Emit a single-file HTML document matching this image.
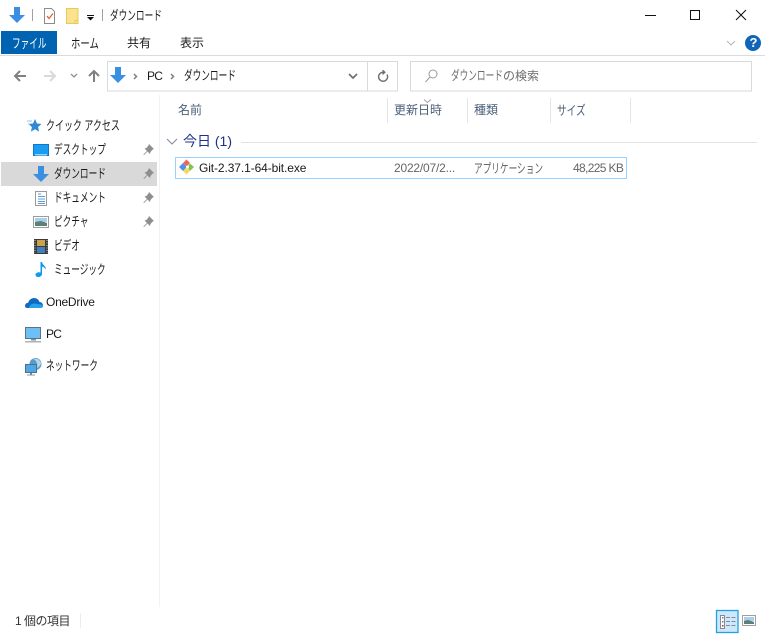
<!DOCTYPE html>
<html><head><meta charset="utf-8"><style>
html,body{margin:0;padding:0;width:765px;height:634px;overflow:hidden;background:#fff}
body{position:relative;font-family:"Liberation Sans","Noto Sans CJK JP",sans-serif;font-size:12px;color:#1a1a1a}
.t{position:absolute;white-space:nowrap;font-size:13px;line-height:16px;height:16px;margin-top:1px;transform-origin:0 50%;transform:scaleX(.665)}
.l{position:absolute;white-space:nowrap;line-height:16px;height:16px}
.g{color:#4c607a}
.b{position:absolute;box-sizing:border-box}
svg{position:absolute;overflow:visible}
</style></head><body>
<svg style="left:0;top:0" width="765" height="634" viewBox="0 0 765 634">
<defs><path id="dl" d="M5 0h6v8h5l-8 8-8-8h5z" fill="#3a8fe3"/>
<path id="pin" d="M6 0l5 5-1.500.6L7.500 8 7 10 4.500 7.500 1 11l-.6-.6L4 7 1.500 4.500 3.500 4 5.400 1.500z" fill="#8e8e8e"/></defs>
<use href="#dl" x="9" y="7"/>
<rect x="32" y="9" width="1" height="12" fill="#a0a0a0"/>
<path d="M44.500 8.500h7l3 3v12h-10z" fill="#fff" stroke="#8c8c8c"/><path d="M47 16l2 2.500 4-5" fill="none" stroke="#e2603a" stroke-width="1.300"/>
<path d="M66.500 8.500h11.500v15h-11.500z" fill="#fbe28f" stroke="#e8c95e"/><path d="M75 24v-3.500h3" fill="none" stroke="#e8c95e"/>
<rect x="87" y="15" width="7" height="1" fill="#111"/><path d="M87 17h7l-3.500 3.500z" fill="#111"/>
<rect x="102" y="9" width="1" height="12" fill="#a0a0a0"/>
<rect x="645" y="15" width="11" height="1" fill="#111"/>
<rect x="690.500" y="10.500" width="9" height="9" fill="none" stroke="#111"/>
<path d="M736 10l10 10M746 10l-10 10" stroke="#111" stroke-width="1.050" fill="none"/>
<path d="M727 41l4 4 4-4" fill="none" stroke="#b5b5b5"/>
<circle cx="753" cy="43" r="8" fill="#0f66b8"/>
<rect x="0" y="55" width="765" height="1" fill="#dadbdc"/>
<path d="M26 76H15.500M20 71l-5 5 5 5" fill="none" stroke="#808080" stroke-width="2"/>
<path d="M44 76h10.500M50 71l5 5-5 5" fill="none" stroke="#d9d9d9" stroke-width="2"/>
<path d="M71 74l3 3 3-3" fill="none" stroke="#8f8f8f" stroke-width="1.300"/>
<path d="M94 82V71M89 76l5-5 5 5" fill="none" stroke="#808080" stroke-width="2"/>
<rect x="107.500" y="61.500" width="290" height="29.500" fill="#fff" stroke="#d9d9d9"/>
<rect x="367" y="61" width="1" height="30" fill="#d9d9d9"/>
<use href="#dl" x="110" y="67"/>
<path d="M134 74l2.500 2.500-2.500 2.500M171 74l2.500 2.500-2.500 2.500" fill="none" stroke="#808080" stroke-width="1.500"/>
<path d="M349 74l4 4 4-4" fill="none" stroke="#707070" stroke-width="1.700"/>
<path d="M387 74.500a4.500 4.500 0 1 1-3.200-2.200h1.200M382.500 70.300l2.300 2-2.300 2" fill="none" stroke="#707070" stroke-width="1.400"/>
<rect x="410.500" y="61.500" width="341" height="29.500" fill="#fff" stroke="#d9d9d9"/>
<circle cx="433" cy="74" r="4" fill="none" stroke="#9a9a9a"/><path d="M430 77l-4.500 5" stroke="#9a9a9a" fill="none"/>
<rect x="159" y="95" width="1" height="512" fill="#f2f2f2"/>
<rect x="1" y="162" width="156" height="24" fill="#d9d9d9"/>
<path d="M35 119l2 4.500 4.500.5-3.400 3 1 4.600-4.100-2.400-4.100 2.400 1-4.600-3.400-3 4.500-.5z" fill="#2f88d8"/><path d="M27 121h5M28 124h2" stroke="#8cc4ef"/>
<rect x="33.500" y="144.500" width="15" height="11" fill="#1a9cf0" stroke="#0f78c8"/><rect x="35" y="154" width="12" height="1.500" fill="#9ad4f8"/>
<use href="#dl" x="33" y="166"/>
<g transform="translate(143 144)"><use href="#pin"/></g><g transform="translate(143 168)"><use href="#pin"/></g><g transform="translate(143 192)"><use href="#pin"/></g><g transform="translate(143 216)"><use href="#pin"/></g>
<rect x="35.500" y="191.500" width="11" height="14" fill="#fff" stroke="#9a9a9a"/><path d="M38 194h3M38 196.500h7M38 199h7M38 201.500h7M38 203.500h7" stroke="#5b9bd5"/>
<rect x="33.500" y="216.500" width="15" height="11" fill="#fff" stroke="#9c9c9c"/><path d="M35 218h12v4l-12 1z" fill="#a8d0ee"/><path d="M35 222l6-1 6 2v3H35z" fill="#5c8074"/>
<rect x="34" y="239" width="14" height="15" fill="#3a3a3a"/><rect x="37" y="240" width="8" height="6" fill="#c9a24a"/><rect x="37" y="247" width="8" height="6" fill="#3f7fc0"/><path d="M35 240v13M47 240v13" stroke="#cfcfcf" stroke-dasharray="1 1.500"/>
<path d="M40.500 262h1.500c.5 3 4 4 4 7.500-1-1.500-2.500-2.500-4-2.700V274c0 1.700-1.600 3-3.500 3s-3-1-3-2.300 1.600-2.500 3.500-2.500c.6 0 1.100.1 1.500.3z" fill="#0f9af0"/>
<path d="M25 306c0-2 1.500-3.300 3.200-3.300C29 299.800 31.500 298 34 298c2.600 0 4.800 1.600 5.400 4 2.200 0 3.600 1.800 3.600 3.500 0 1.600-1.200 2.500-2.600 2.500H27.500C26 308 25 307.300 25 306z" fill="#0f6cbd"/><path d="M29 308c0-2.300 2.500-4.500 5.500-4.500 2 0 3.500.7 5 .7 1.600 0 3.500 1.300 3.500 1.500 0 1.600-1.200 2.300-2.600 2.300z" fill="#2aa0e8"/>
<rect x="25.500" y="327.500" width="15" height="11" fill="#6cc0f6" stroke="#5f7482"/><rect x="31" y="339" width="5" height="1.500" fill="#7f8f9a"/><rect x="25" y="341" width="16" height="1.500" fill="#aab4bc"/>
<circle cx="35.500" cy="364" r="6" fill="#5a9bc9"/><path d="M33 359c3 1 5 4 4 9 2-1 4-3 4-5-.5-2-3-5-8-4z" fill="#b6d6e9"/>
<rect x="25.500" y="364.500" width="11" height="8" fill="#4ea7e6" stroke="#4f7186"/><rect x="30" y="373" width="2" height="1.500" fill="#708795"/><rect x="27" y="374.500" width="8" height="1" fill="#8a9aa6"/>
<rect x="387" y="98" width="1" height="25" fill="#e5e5e5"/><rect x="467" y="98" width="1" height="25" fill="#e5e5e5"/><rect x="550" y="98" width="1" height="25" fill="#e5e5e5"/><rect x="630" y="98" width="1" height="25" fill="#e5e5e5"/>
<path d="M424 99.500l3.500 3 3.500-3" fill="none" stroke="#a0a0a0"/>
<path d="M167 139l5 5 5-5" fill="none" stroke="#808a96"/>
<rect x="241" y="142" width="516" height="1" fill="#e3e3e3"/>
<rect x="175.500" y="157.500" width="451" height="21" fill="#fff" stroke="#99d1ff"/>
<path d="M179 167l4-4 4 4-4 4z" fill="#4f93e6"/><path d="M183 163l3.500-3.500 3.500 3.500-3.500 3.500z" fill="#f0655a"/><path d="M187 167l3-3.500 4 3.500-4 4z" fill="#7dc64e"/><path d="M183 171l3.500-3.500 3.500 3.500-3.500 3.500z" fill="#f8d95a"/><circle cx="187.500" cy="167" r="1.500" fill="#fff"/>
<rect x="80" y="613" width="1" height="15" fill="#ececec"/>
<rect x="716.500" y="610.500" width="21.500" height="22" fill="#cce8ff" stroke="#26a0da" stroke-width="1.300"/>
<rect x="720.500" y="615.500" width="4" height="13" fill="#fff" stroke="#8a8a8a"/><rect x="722" y="617" width="1.500" height="1.500" fill="#777"/><rect x="722" y="621" width="1.500" height="1.500" fill="#777"/><rect x="722" y="625" width="1.500" height="1.500" fill="#b03030"/>
<path d="M726 617.500h4M731.500 617.500h4M726 621.500h4M731.500 621.500h4M726 625.500h4M731.500 625.500h4" stroke="#8a8a8a"/>
<rect x="742.500" y="615.500" width="13" height="10" fill="#fff" stroke="#9f9f9f"/><path d="M744 617h10v4l-10 1z" fill="#a8d0ee"/><path d="M744 621l4-1 6 2v2h-10z" fill="#5c8074"/>
</svg>
<div class="t" style="left:110px;top:7px">ダウンロード</div>
<div class="b" style="left:1px;top:31px;width:56px;height:23px;background:#0063b1"></div>
<div class="t" style="left:12px;top:35px;color:#fff">ファイル</div>
<div class="t" style="left:71px;top:35px;transform:scaleX(.72)">ホーム</div>
<div class="l" style="left:127px;top:35px">共有</div>
<div class="l" style="left:180px;top:35px">表示</div>
<div class="l" style="left:147px;top:68px;letter-spacing:-.8px">PC</div>
<div class="t" style="left:184px;top:67px">ダウンロード</div>
<div class="t" style="left:451px;top:67px;color:#6d6d6d">ダウンロード</div>
<div class="l" style="left:503px;top:68px;color:#6d6d6d">の検索</div>
<div class="t" style="left:46px;top:117px;transform:scaleX(.69)">クイック アクセス</div>
<div class="t" style="left:54px;top:141px">デスクトップ</div>
<div class="t" style="left:54px;top:165px">ダウンロード</div>
<div class="t" style="left:54px;top:189px">ドキュメント</div>
<div class="t" style="left:54px;top:213px">ピクチャ</div>
<div class="t" style="left:54px;top:237px">ビデオ</div>
<div class="t" style="left:54px;top:261px">ミュージック</div>
<div class="l" style="left:46px;top:294px;letter-spacing:-.25px">OneDrive</div>
<div class="l" style="left:46px;top:326px;letter-spacing:-.8px">PC</div>
<div class="t" style="left:46px;top:357px">ネットワーク</div>
<div class="l g" style="left:178px;top:102px">名前</div>
<div class="l g" style="left:394px;top:102px">更新日時</div>
<div class="l g" style="left:474px;top:102px">種類</div>
<div class="t g" style="left:557px;top:102px;transform:scaleX(.74)">サイズ</div>
<div class="l" style="left:183px;top:133px;font-size:14px;color:#1e3287">今日 (1)</div>
<div class="l" style="left:199px;top:160px;letter-spacing:-.1px">Git-2.37.1-64-bit.exe</div>
<div class="l" style="left:394px;top:160px;color:#666;letter-spacing:-.2px">2022/07/2...</div>
<div class="t" style="left:474px;top:160px;color:#666">アプリケーション</div>
<div class="l" style="left:573px;top:160px;color:#666;letter-spacing:-.65px">48,225 KB</div>
<div class="l" style="left:15px;top:613px;color:#333;letter-spacing:-.5px">1 個の項目</div>
<div class="l" style="left:749.500px;top:35px;color:#fff;font-weight:bold;font-size:13px">?</div>
</body></html>
